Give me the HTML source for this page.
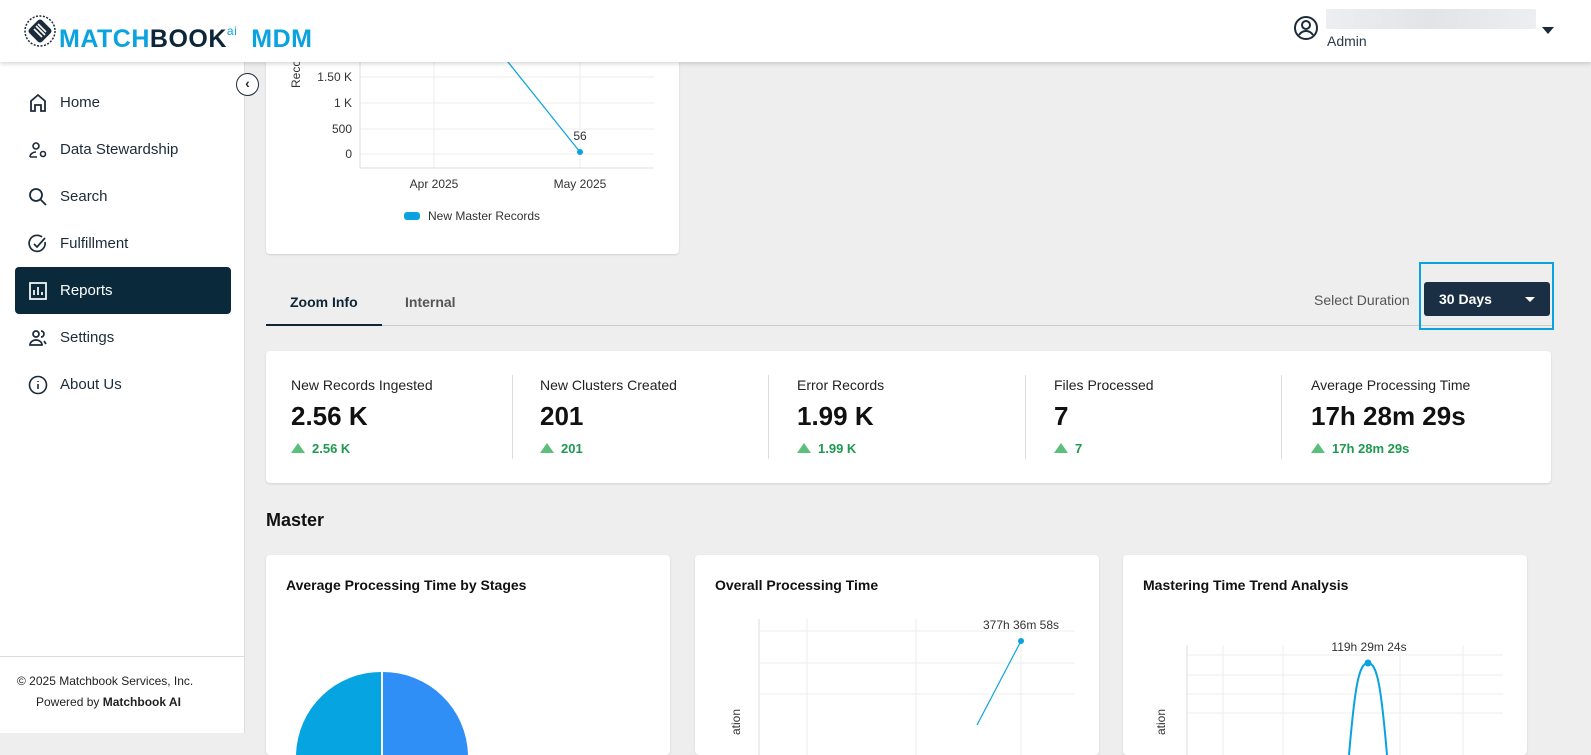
<!DOCTYPE html>
<html><head><meta charset="utf-8"><style>
*{box-sizing:border-box;margin:0;padding:0}
body{width:1591px;height:733px;overflow:hidden;background:#eeeeee;font-family:"Liberation Sans",sans-serif;color:#1a1a1a;position:relative}
.hdr{position:absolute;left:0;top:0;width:1591px;height:62px;background:#fff;box-shadow:0 2px 4px rgba(0,0,0,.15);z-index:5}
.side{position:absolute;left:0;top:62px;width:245px;height:671px;background:#fff;border-right:1px solid #ddd}
.nav{position:absolute;left:15px;width:216px;height:47px;display:flex;align-items:center;font-size:15px;color:#1c2b3a}
.nav svg{margin-left:13px;margin-right:12px}
.nav.act{background:#0a2a3c;color:#fff;border-radius:4px}
.card{position:absolute;background:#fff;border-radius:4px;box-shadow:0 1px 2px rgba(0,0,0,.12)}
.kpi{position:absolute;top:0;height:132px;width:220px;white-space:nowrap}
.kpi .t{position:absolute;top:26px;font-size:14px;color:#222}
.kpi .v{position:absolute;top:50px;font-size:26px;font-weight:bold;color:#111}
.kpi .d{position:absolute;top:90px;font-size:13px;font-weight:bold;color:#1d9a4f;white-space:nowrap}
.kpi .d:before{content:"";display:inline-block;border-left:7px solid transparent;border-right:7px solid transparent;border-bottom:10px solid #5cbf7c;margin-right:7px}
.sep{position:absolute;top:24px;width:1px;height:84px;background:#ddd}
.ct{position:absolute;left:20px;top:22px;font-size:14px;font-weight:bold;color:#111}
</style></head><body>
<div class="hdr">
 <svg style="position:absolute;left:24px;top:15px" width="32" height="32" viewBox="0 0 32 32"><circle cx="16" cy="16" r="15" fill="none" stroke="#1c2b3a" stroke-width="1.5" stroke-dasharray="2 1.5"/><rect x="7" y="7" width="18" height="18" rx="3" transform="rotate(45 16 16)" fill="#1c2b3a"/><path d="M10 14l8 8M12 11l9 9M14 9l8 8" stroke="#fff" stroke-width="1.6"/></svg>
 <div style="position:absolute;left:59px;top:16px;font-size:25px;font-weight:bold;letter-spacing:0.5px;line-height:30px;white-space:nowrap"><span style="color:#0aa3e0">MATCH</span><span style="color:#0d2637">BOOK</span><sup style="color:#0aa3e0;font-size:12px;font-weight:normal;vertical-align:12px">ai</sup><span style="color:#0aa3e0;margin-left:14px">MDM</span></div>
 <svg style="position:absolute;left:1293px;top:15px" width="26" height="26" viewBox="0 0 26 26" fill="none" stroke="#1c2b3a" stroke-width="2"><circle cx="13" cy="13" r="11"/><circle cx="13" cy="10" r="4"/><path d="M6 20c2-3 4-4 7-4s5 1 7 4"/></svg>
 <div style="position:absolute;left:1326px;top:9px;width:210px;height:20px;background:linear-gradient(90deg,#eceef1,#e2e4e8,#eceef1);border-radius:2px"></div>
 <div style="position:absolute;left:1327px;top:33px;font-size:14px;color:#2a3a4a">Admin</div>
 <div style="position:absolute;left:1542px;top:27px;border-left:6px solid transparent;border-right:6px solid transparent;border-top:7px solid #1c2b3a"></div>
</div>
<div class="side">
 <div class="nav" style="top:17px"><svg width="20" height="20" viewBox="0 0 20 20" fill="none" stroke="#1c2b3a" stroke-width="1.8"><path d="M3 18V8l7-6 7 6v10h-4v-6H7v6z"/></svg>Home</div>
 <div class="nav" style="top:64px"><svg width="20" height="20" viewBox="0 0 20 20" fill="none" stroke="#1c2b3a" stroke-width="1.6"><circle cx="8" cy="6" r="3"/><path d="M2 17c0-3 3-5 6-5M2 17h7"/><circle cx="15" cy="14" r="2.5"/></svg>Data Stewardship</div>
 <div class="nav" style="top:111px"><svg width="20" height="20" viewBox="0 0 20 20" fill="none" stroke="#1c2b3a" stroke-width="1.8"><circle cx="8" cy="8" r="6"/><path d="M12.5 12.5L18 18"/></svg>Search</div>
 <div class="nav" style="top:158px"><svg width="20" height="20" viewBox="0 0 20 20" fill="none" stroke="#1c2b3a" stroke-width="1.7"><path d="M17 8a8 8 0 1 1-3-5"/><path d="M6 10l3 3 8-9"/></svg>Fulfillment</div>
 <div class="nav act" style="top:205px"><svg width="20" height="20" viewBox="0 0 20 20" fill="none" stroke="#fff" stroke-width="1.7"><rect x="2" y="2" width="16" height="16"/><path d="M6 14V9M10 14V6M14 14v-3"/></svg>Reports</div>
 <div class="nav" style="top:252px"><svg width="20" height="20" viewBox="0 0 20 20" fill="none" stroke="#1c2b3a" stroke-width="1.7"><circle cx="8" cy="6" r="3"/><path d="M2 17c0-3 3-5 6-5s6 2 6 5z"/><path d="M13 3a3 3 0 0 1 0 6M16 13l2 3"/></svg>Settings</div>
 <div class="nav" style="top:299px"><svg width="20" height="20" viewBox="0 0 20 20" fill="none" stroke="#1c2b3a" stroke-width="1.6"><circle cx="10" cy="10" r="8.5"/><path d="M10 9v5M10 6v1"/></svg>About Us</div>
 <div style="position:absolute;left:0;top:594px;width:245px;border-top:1px solid #ddd"></div>
 <div style="position:absolute;left:17px;top:612px;font-size:12px;color:#222">© 2025 Matchbook Services, Inc.</div>
 <div style="position:absolute;left:36px;top:633px;font-size:12px;color:#222">Powered by <b>Matchbook AI</b></div>
</div>
<div style="position:absolute;left:236px;top:73px;width:23px;height:23px;border-radius:50%;border:1.5px solid #1c2b3a;background:#fff;z-index:6;font-size:14px;line-height:19px;text-align:center;color:#1c2b3a;font-weight:bold">‹</div>
<div class="card" style="left:266px;top:40px;width:413px;height:214px">
 <svg style="position:absolute;left:0;top:0" width="413" height="214">
  <g stroke="#eee"><line x1="94" y1="37" x2="388" y2="37"/><line x1="94" y1="63" x2="388" y2="63"/><line x1="94" y1="89" x2="388" y2="89"/><line x1="94" y1="114" x2="388" y2="114"/><line x1="168" y1="22" x2="168" y2="128"/><line x1="314" y1="22" x2="314" y2="128"/></g>
  <line x1="94" y1="128" x2="388" y2="128" stroke="#ddd"/><line x1="94" y1="22" x2="94" y2="128" stroke="#ddd"/>
  <line x1="238" y1="17" x2="314" y2="112" stroke="#0aa3e0" stroke-width="1.2"/><circle cx="314" cy="112" r="3" fill="#0aa3e0"/>
  <text x="314" y="100" font-size="12" text-anchor="middle" fill="#333" font-family="Liberation Sans">56</text>
  <text transform="translate(34 48) rotate(-90)" font-size="12" fill="#333" font-family="Liberation Sans">Reco</text>
  <g font-size="12" fill="#333" font-family="Liberation Sans" text-anchor="end"><text x="86" y="41">1.50 K</text><text x="86" y="67">1 K</text><text x="86" y="93">500</text><text x="86" y="118">0</text></g>
  <g font-size="12" fill="#333" font-family="Liberation Sans" text-anchor="middle"><text x="168" y="148">Apr 2025</text><text x="314" y="148">May 2025</text></g>
  <rect x="138" y="172" width="16" height="8" rx="3" fill="#0aa3e0"/><text x="162" y="180" font-size="12" fill="#333" font-family="Liberation Sans">New Master Records</text>
 </svg>
</div>
<div style="position:absolute;left:290px;top:294px;font-size:14px;font-weight:bold;color:#0d2637">Zoom Info</div>
<div style="position:absolute;left:405px;top:294px;font-size:14px;font-weight:bold;color:#555">Internal</div>
<div style="position:absolute;left:266px;top:325px;width:1286px;height:1px;background:#ccc"></div>
<div style="position:absolute;left:266px;top:324px;width:116px;height:2px;background:#0d2637"></div>
<div style="position:absolute;left:1314px;top:292px;font-size:14px;color:#555">Select Duration</div>
<div style="position:absolute;left:1419px;top:262px;width:135px;height:68px;border:2px solid #0aa3e0"></div>
<div style="position:absolute;left:1424px;top:282px;width:126px;height:34px;background:#1a2e44;border-radius:3px;color:#fff;font-size:14px;font-weight:bold;line-height:34px;padding-left:15px">30 Days<span style="position:absolute;right:15px;top:15px;border-left:5px solid transparent;border-right:5px solid transparent;border-top:5px solid #fff"></span></div>
<div class="card" style="left:266px;top:351px;width:1285px;height:132px">
 <div class="kpi" style="left:25px"><div class="t">New Records Ingested</div><div class="v">2.56 K</div><div class="d">2.56 K</div></div>
 <div class="sep" style="left:246px"></div>
 <div class="kpi" style="left:274px"><div class="t">New Clusters Created</div><div class="v">201</div><div class="d">201</div></div>
 <div class="sep" style="left:502px"></div>
 <div class="kpi" style="left:531px"><div class="t">Error Records</div><div class="v">1.99 K</div><div class="d">1.99 K</div></div>
 <div class="sep" style="left:759px"></div>
 <div class="kpi" style="left:788px"><div class="t">Files Processed</div><div class="v">7</div><div class="d">7</div></div>
 <div class="sep" style="left:1015px"></div>
 <div class="kpi" style="left:1045px"><div class="t">Average Processing Time</div><div class="v">17h 28m 29s</div><div class="d">17h 28m 29s</div></div>
</div>
<div style="position:absolute;left:266px;top:510px;font-size:18px;font-weight:bold;color:#111">Master</div>
<div class="card" style="left:266px;top:555px;width:404px;height:200px"><div class="ct">Average Processing Time by Stages</div>
 <svg style="position:absolute;left:0;top:0" width="404" height="200"><path d="M116 117A85 85 0 0 0 30 200h86z" fill="#06a4e0"/><path d="M116 117A85 85 0 0 1 202 200h-86z" fill="#2f8ff7"/><line x1="116" y1="117" x2="116" y2="200" stroke="#fff" stroke-width="2"/></svg></div>
<div class="card" style="left:695px;top:555px;width:404px;height:200px"><div class="ct">Overall Processing Time</div>
 <svg style="position:absolute;left:0;top:0" width="404" height="200"><g stroke="#eee"><line x1="64" y1="76" x2="380" y2="76"/><line x1="64" y1="108" x2="380" y2="108"/><line x1="64" y1="139" x2="380" y2="139"/><line x1="112" y1="64" x2="112" y2="200"/><line x1="221" y1="64" x2="221" y2="200"/><line x1="326" y1="64" x2="326" y2="200"/></g><line x1="64" y1="64" x2="64" y2="200" stroke="#ddd"/><polyline points="282,170 326,86" fill="none" stroke="#0aa3e0" stroke-width="1.2"/><circle cx="326" cy="86" r="3" fill="#0aa3e0"/><text x="326" y="74" font-size="12" text-anchor="middle" fill="#333" font-family="Liberation Sans">377h 36m 58s</text><text transform="translate(45 180) rotate(-90)" font-size="12" fill="#333" font-family="Liberation Sans">ation</text></svg></div>
<div class="card" style="left:1123px;top:555px;width:404px;height:200px"><div class="ct">Mastering Time Trend Analysis</div>
 <svg style="position:absolute;left:0;top:0" width="404" height="200"><g stroke="#eee"><line x1="64" y1="100" x2="380" y2="100"/><line x1="64" y1="120" x2="380" y2="120"/><line x1="64" y1="139" x2="380" y2="139"/><line x1="64" y1="158" x2="380" y2="158"/><line x1="100" y1="90" x2="100" y2="200"/><line x1="160" y1="90" x2="160" y2="200"/><line x1="277" y1="90" x2="277" y2="200"/><line x1="340" y1="90" x2="340" y2="200"/></g><line x1="64" y1="90" x2="64" y2="200" stroke="#ddd"/><path d="M226 200C232 130 236 108 245 108S258 130 264 200" fill="none" stroke="#0aa3e0" stroke-width="2"/><circle cx="245" cy="108" r="3.5" fill="#0aa3e0"/><text x="246" y="96" font-size="12" text-anchor="middle" fill="#333" font-family="Liberation Sans">119h 29m 24s</text><text transform="translate(42 180) rotate(-90)" font-size="12" fill="#333" font-family="Liberation Sans">ation</text></svg></div>
</body></html>
